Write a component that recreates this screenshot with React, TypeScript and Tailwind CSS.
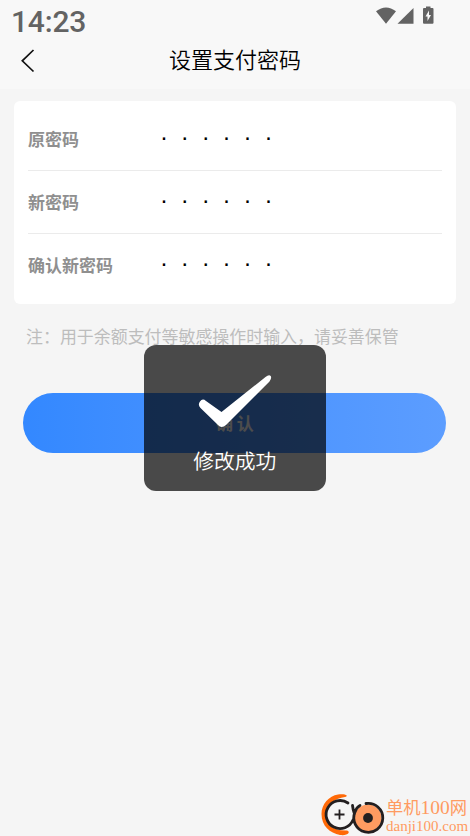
const FIELDS = [
  { label: '原密码', height: 'h-[70px] pt-[7px]' },
  { label: '新密码', height: 'h-[63px]' },
  { label: '确认新密码', height: 'h-[62px]' },
];

function StatusBar() {
  return (
    <div className="flex h-8 items-start justify-between text-[#636363]">
      <span className="ml-[11px] mt-[6px] font-[Roboto] text-[30px] font-medium leading-8 tracking-[-0.2px]">14:23</span>
      <svg className="mt-[5px] mr-[34px] h-5 w-[60px]" viewBox="0 0 60 20" fill="currentColor">
        <path d="M0 6.300Q10 -1.300 20 6.300L10 18.800Z" />
        <path d="M37.500 3V18.800H21.500Z" />
        <path
          fillRule="evenodd"
          d="M48 3H50V1.500H54.500V3H56.500Q57.500 3 57.500 4V17.800Q57.500 18.800 56.500 18.800H48Q47 18.800 47 17.800V4Q47 3 48 3ZM53 5.500L49.500 11.500H51.500V16L55 10H53Z"
        />
      </svg>
    </div>
  );
}

function Header() {
  return (
    <header className="h-[89px] bg-[#f8f8f8]">
      <StatusBar />
      <div className="grid h-[57px] grid-cols-[60px_1fr_60px] items-center">
        <button aria-label="返回" className="pl-5">
          <svg className="h-6 w-4" viewBox="0 0 16 24" fill="none" stroke="#111" strokeWidth="1.7">
            <path d="M13.500 1L2.300 11.800L13.500 22.500" />
          </svg>
        </button>
        <h1 className="pb-[5px] text-center text-[22px] font-[350] leading-8 text-black">设置支付密码</h1>
      </div>
    </header>
  );
}

function PasswordRow({ label, height }: { label: string; height: string }) {
  return (
    <div className={`flex items-center ${height}`}>
      <span className="w-[125.500px] text-[17px] font-bold text-[#8f8f8f]">{label}</span>
      <div className="flex pb-[4px] text-[24px] leading-6 text-black">
        {Array.from({ length: 6 }, (_, i) => (
          <span key={i} className="w-[20.9px] text-center font-['Liberation_Sans']">·</span>
        ))}
      </div>
    </div>
  );
}

function Toast() {
  return (
    <div className="absolute top-[345px] left-[143.500px] flex h-[146px] w-[182.500px] flex-col items-center rounded-[12px] bg-black/70 pt-[30px] text-white">
      <svg className="h-[54px] w-[74px]" viewBox="0 0 74 54" fill="currentColor">
        <path d="M2 26.500Q4.500 23 8 26L23.500 37L67.500 2Q71 -0.800 72.700 1Q74 3 71.500 6.500L28 50Q23.500 54 20 50L2.500 33Q-0.500 30 2 26.500Z" />
      </svg>
      <span className="mt-[15px] text-[20.800px] font-[350] leading-8">修改成功</span>
    </div>
  );
}

function Watermark() {
  return (
    <div className="absolute right-0 bottom-0 flex h-[44px] w-[150px] text-[#ff9b61]">
      <svg className="h-[44px] w-[66px] shrink-0" viewBox="0 0 66 44" fill="none">
        <path d="M25 5C29 4 26 1.500 18 2.500C9 4 1.500 12 1.500 22C1.500 34 10 41 20 43C28 44 31 40 27 38.500C12 39 5 31 6 21C7.500 12 15 6.500 25 5Z" fill="#ff6a08" />
        <path d="M28 11A14 14 0 1 0 33 28" stroke="#231f20" strokeWidth="2.800" strokeLinecap="round" />
        <path d="M19.500 17.500V27.500M14.500 22.500H24.500" stroke="#231f20" strokeWidth="1.800" />
        <circle cx="48" cy="26" r="13.500" fill="#ff9b61" />
        <path d="M46 11.500A14.500 14.500 0 1 1 35 20C36 17 38 14.500 40 13.500M32.500 13.500Q33 18 34.500 22" stroke="#231f20" strokeWidth="2.800" strokeLinecap="round" />
        <circle cx="48" cy="26" r="4.900" fill="#231f20" />
      </svg>
      <div className="whitespace-nowrap">
        <div className="mt-[5px] text-[17.300px] leading-[19px]">
          单机<span className="font-['Liberation_Serif',serif] text-[19.500px]">100</span>网
        </div>
        <div className="mt-px font-['Liberation_Serif',serif] text-[15px] leading-[16px]">danji100.com</div>
      </div>
    </div>
  );
}

export default function App() {
  return (
    <div className="relative h-[836px] w-[470px] overflow-hidden bg-[#f5f5f5] font-['Noto_Sans_CJK_SC',sans-serif]">
      <Header />
      <main>
        <section className="mx-[14px] mt-[12px] h-[203px] divide-y divide-[#ebebeb] rounded-[6px] bg-white px-[14px]">
          {FIELDS.map(f => (
            <PasswordRow key={f.label} label={f.label} height={f.height} />
          ))}
        </section>
        <p className="mt-[19px] ml-[26px] text-[16.950px] leading-[26px] text-[#bdbdbd]">注：用于余额支付等敏感操作时输入，请妥善保管</p>
        <button className="mt-[44px] ml-[23.400px] h-[60px] w-[423px] rounded-full bg-linear-to-r from-[#3388ff] to-[#5c9dff] text-[17px] font-bold text-white">
          确 认
        </button>
      </main>
      <Toast />
      <Watermark />
    </div>
  );
}
